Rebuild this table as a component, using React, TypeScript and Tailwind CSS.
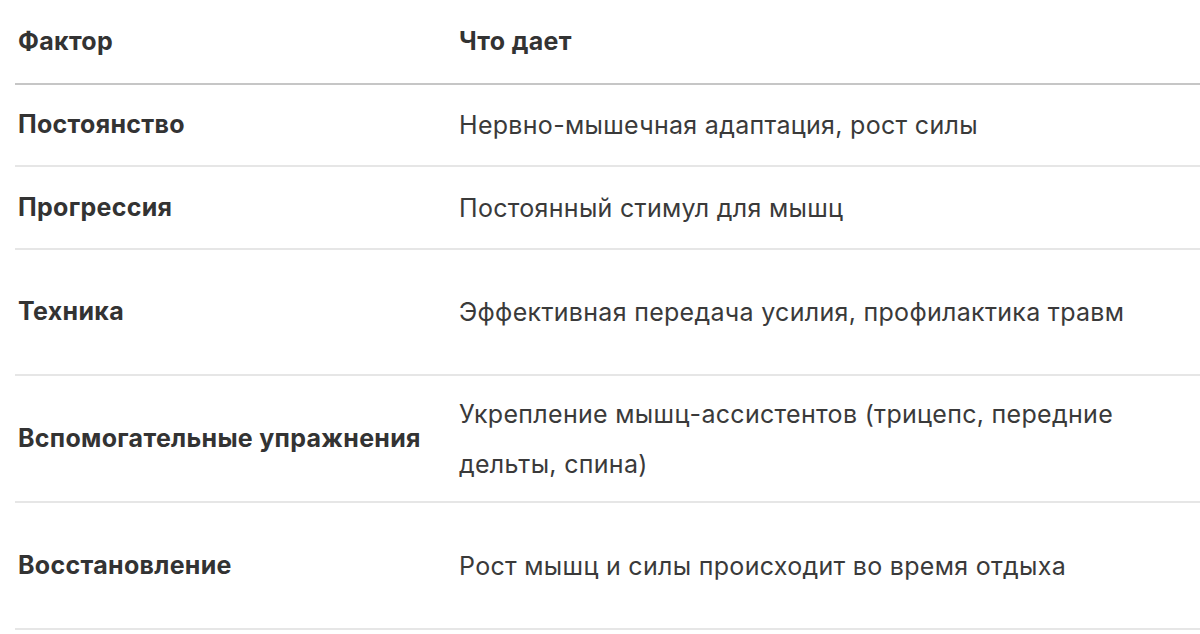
const rows = [
  { factor: 'Постоянство', effect: 'Нервно-мышечная адаптация, рост силы', h: 'h-[82px]' },
  { factor: 'Прогрессия', effect: 'Постоянный стимул для мышц', h: 'h-[83px]' },
  { factor: 'Техника', effect: 'Эффективная передача усилия, профилактика травм', h: 'h-[126px]' },
  {
    factor: 'Вспомогательные упражнения',
    effect: 'Укрепление мышц-ассистентов (трицепс, передние дельты, спина)',
    h: 'h-[127px]',
  },
  { factor: 'Восстановление', effect: 'Рост мышц и силы происходит во время отдыха', h: 'h-[127px]' },
];

export default function App() {
  return (
    <main className="min-h-screen bg-white pl-[15px] font-['Inter','Liberation_Sans',sans-serif] text-[25px] tracking-[0.3px] text-[#333]">
      <table className="w-full border-collapse text-left">
        <thead>
          <tr className="h-[84px] border-b-2 border-[#c6c6c6]">
            <th className="w-[444px] pl-[3px] font-bold">Фактор</th>
            <th className="pl-0 font-bold">Что дает</th>
          </tr>
        </thead>
        <tbody>
          {rows.map((r) => (
            <tr key={r.factor} className={`${r.h} border-b-2 border-[#e6e6e6]`}>
              <td className="pl-[3px] font-bold align-middle">{r.factor}</td>
              <td className="pr-[60px] align-middle leading-[50px] text-[#3a3a3a]">{r.effect}</td>
            </tr>
          ))}
        </tbody>
      </table>
    </main>
  );
}
